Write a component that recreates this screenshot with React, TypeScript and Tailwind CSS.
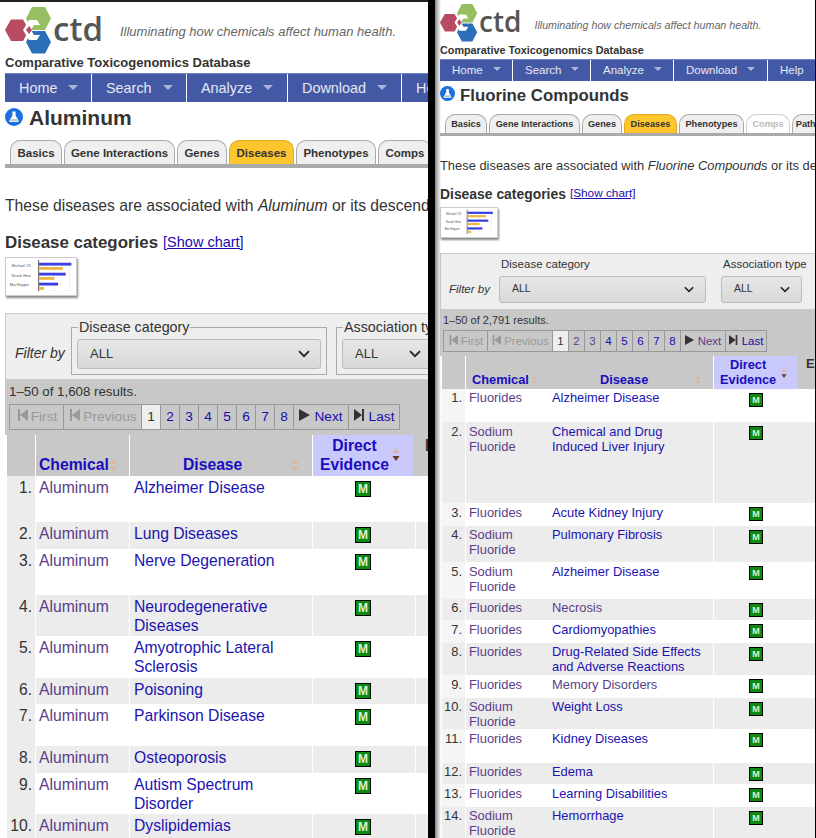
import type { ReactNode } from "react";

type Row = { n: number; chem: string[]; dis: string[]; seen?: boolean; h: string; t?: string };

const leftRows: Row[] = [
  { n: 1, chem: ["Aluminum"], dis: ["Alzheimer Disease"], h: "h-[46px]" },
  { n: 2, chem: ["Aluminum"], dis: ["Lung Diseases"], h: "h-[27px]" },
  { n: 3, chem: ["Aluminum"], dis: ["Nerve Degeneration"], h: "h-[46px]" },
  { n: 4, chem: ["Aluminum"], dis: ["Neurodegenerative", "Diseases"], h: "h-[41px]" },
  { n: 5, chem: ["Aluminum"], dis: ["Amyotrophic Lateral", "Sclerosis"], h: "h-[42px]" },
  { n: 6, chem: ["Aluminum"], dis: ["Poisoning"], h: "h-[26px]" },
  { n: 7, chem: ["Aluminum"], dis: ["Parkinson Disease"], h: "h-[42px]" },
  { n: 8, chem: ["Aluminum"], dis: ["Osteoporosis"], h: "h-[27px]" },
  { n: 9, chem: ["Aluminum"], dis: ["Autism Spectrum", "Disorder"], h: "h-[41px]" },
  { n: 10, chem: ["Aluminum"], dis: ["Dyslipidemias"], h: "h-[30px]" },
];

const sodium = ["Sodium", "Fluoride"];
const rightRows: Row[] = [
  { n: 1, chem: ["Fluorides"], dis: ["Alzheimer Disease"], h: "h-[33px]" },
  { n: 2, chem: sodium, dis: ["Chemical and Drug", "Induced Liver Injury"], h: "h-[81px]", t: "pt-[2px]" },
  { n: 3, chem: ["Fluorides"], dis: ["Acute Kidney Injury"], h: "h-[23px]", t: "pt-[2px]" },
  { n: 4, chem: sodium, dis: ["Pulmonary Fibrosis"], h: "h-[36px]" },
  { n: 5, chem: sodium, dis: ["Alzheimer Disease"], h: "h-[37px]", t: "pt-[2px]" },
  { n: 6, chem: ["Fluorides"], dis: ["Necrosis"], seen: true, h: "h-[21px]" },
  { n: 7, chem: ["Fluorides"], dis: ["Cardiomyopathies"], h: "h-[23px]", t: "pt-[2px]" },
  { n: 8, chem: ["Fluorides"], dis: ["Drug-Related Side Effects", "and Adverse Reactions"], h: "h-[32px]" },
  { n: 9, chem: ["Fluorides"], dis: ["Memory Disorders"], seen: true, h: "h-[23px]", t: "pt-[2px]" },
  { n: 10, chem: sodium, dis: ["Weight Loss"], h: "h-[31px]" },
  { n: 11, chem: ["Fluorides"], dis: ["Kidney Diseases"], h: "h-[34px]", t: "pt-[2px]" },
  { n: 12, chem: ["Fluorides"], dis: ["Edema"], h: "h-[21px]" },
  { n: 13, chem: ["Fluorides"], dis: ["Learning Disabilities"], h: "h-[23px]", t: "pt-[2px]" },
  { n: 14, chem: sodium, dis: ["Hemorrhage"], h: "h-[40px]" },
];

function Logo({ className }: { className: string }) {
  return (
    <svg viewBox="0 0 47 47" className={className}>
      <polygon points="0,23 6,12.5 18,12.5 24,23 18,34 6,34" fill="#b84a62" />
      <polygon points="21,11.5 27,0 40,0 46,11.5 40,23 27,23" fill="#96bf62" />
      <polygon points="21,35 27,24 40,24 46,35 40,46.5 27,46.5" fill="#2a6fb8" />
      <polygon points="18,23 24,13 32,13 35,18 29,18 26,23 29,28 35,28 32,33 24,33" fill="#fff" />
      <polygon points="21,23 24,19 27,23 24,27" fill="#b84a62" />
    </svg>
  );
}

function Flask({ className }: { className: string }) {
  return (
    <svg viewBox="0 0 18 18" className={className}>
      <circle cx="9" cy="9" r="9" fill="#1b6fe0" />
      <path d="M7.4 3.6h3.2v4l3 5.2c.3.6 0 1.2-.7 1.2H5.1c-.7 0-1-.6-.7-1.2l3-5.2z" fill="#fff" />
      <path d="M6 11h6l1 2.2H5z" fill="#b9c6d8" />
    </svg>
  );
}

function Chevron({ className }: { className: string }) {
  return (
    <svg viewBox="0 0 12 8" className={className} fill="none" stroke="#222" strokeWidth="1.8">
      <path d="M1 1.2l5 5 5-5" />
    </svg>
  );
}

function Sort({ active, className }: { active?: boolean; className: string }) {
  return (
    <svg viewBox="0 0 8 13" className={className}>
      <path d="M4 0l3.5 5h-7z" fill="#d9b6a0" />
      <path d="M4 13l3.5-5h-7z" fill={active ? "#6b3a1c" : "#d9b6a0"} />
    </svg>
  );
}

function Thumb({ className }: { className: string }) {
  return (
    <div className={className}>
      <svg viewBox="0 0 72 39" className="h-full w-full">
        <text x="5" y="9" fontSize="4" fill="#555">Michael CK</text>
        <text x="5" y="20" fontSize="4" fill="#555">Nicole Hew</text>
        <text x="3" y="30" fontSize="4" fill="#555">Mia Hopper</text>
        <path d="M34 3v32M50 3v32M66 3v32" stroke="#ddd" strokeWidth="0.5" />
        <path d="M33.500 2v33" stroke="#333" strokeWidth="0.8" />
        <rect x="34" y="5" width="34" height="3" fill="#3d3fe0" />
        <rect x="34" y="9.500" width="25" height="3" fill="#edb642" />
        <rect x="34" y="15.500" width="28" height="3" fill="#3d3fe0" />
        <rect x="34" y="20" width="16" height="3" fill="#edb642" />
        <rect x="34" y="26" width="20" height="3" fill="#3d3fe0" />
        <rect x="34" y="30.500" width="5" height="3" fill="#edb642" />
      </svg>
    </div>
  );
}

function NavItem({ label, w, big }: { label: string; w: string; big: boolean }) {
  return (
    <div
      className={`flex shrink-0 items-center border-r border-white ${w} ${
        big ? "pl-[14px] gap-[11px] pt-[1px] text-[14.400px]" : "pl-[12px] gap-[10px] pt-[1px] text-[11.500px]"
      }`}
    >
      <span className="text-[#e4e7f3]">{label}</span>
      <span
        className={
          big
            ? "mt-[-2px] border-x-[5px] border-t-[5px] border-x-transparent border-t-[#aab4d8]"
            : "mt-[-4px] border-x-[4px] border-t-[4px] border-x-transparent border-t-[#aab4d8]"
        }
      />
    </div>
  );
}

function Tab({ label, w, big, on, off }: { label: string; w: string; big: boolean; on?: boolean; off?: boolean }) {
  return (
    <div
      className={`flex shrink-0 items-center justify-center rounded-t-[10px] border border-b-0 font-bold ${w} ${
        big ? "h-[24px] pt-[3px] text-[11.500px]" : "h-[19px] pt-[1px] text-[9.200px]"
      } ${on ? "border-[#e2a91f] bg-[#fdc62e]" : "border-[#aaa] bg-[#efefef]"} ${
        off ? "border-[#ccc] bg-[#fff] text-[#bbb]" : "text-[#333]"
      }`}
    >
      {label}
    </div>
  );
}

function PagerCell({ w, children, cls = "" }: { w: string; children: ReactNode; cls?: string }) {
  return (
    <div className={`flex shrink-0 items-center justify-center gap-[3px] border-r border-[#999] pt-[1px] ${w} ${cls}`}>
      {children}
    </div>
  );
}

const Tri = ({ dir, color, cls }: { dir: "l" | "r"; color: string; cls: string }) => (
  <svg viewBox="0 0 12 12" className={cls}>
    {dir === "l" ? (
      <path d="M2 0h2v12H2zM12 0v12L4 6z" fill={color} />
    ) : (
      <path d="M0 0l11 6-11 6z" fill={color} />
    )}
  </svg>
);

function Badge({ big }: { big: boolean }) {
  return (
    <span
      className={`flex items-center justify-center border border-black bg-[#0c8a12] font-bold text-[#d8f5d0] ${
        big ? "h-[16px] w-[16px] text-[12px]" : "h-[14px] w-[14px] text-[9px]"
      }`}
    >
      M
    </span>
  );
}

function LeftPanel() {
  return (
    <div className="w-[428px] shrink-0 overflow-hidden border-t-2 border-[#222] bg-white text-[#333]">
      <div className="flex h-[53px] items-start pl-[5px] pt-[5px]">
        <Logo className="h-[47px] w-[47px] shrink-0" />
        <span className="mt-[3px] ml-[1px] font-['Open_Sans',sans-serif] text-[33px] leading-[38px] font-semibold text-[#555]">ctd</span>
        <span className="mt-[15px] ml-[17px] whitespace-nowrap text-[13px] text-[#666] italic">
          Illuminating how chemicals affect human health.
        </span>
      </div>
      <div className="ml-[5px] h-[18px] text-[13px] leading-[16px] font-bold whitespace-nowrap">Comparative Toxicogenomics Database</div>
      <div className="ml-[5px] flex h-[29px] border-t border-[#7384c4] bg-[#4459a6]">
        <NavItem big label="Home" w="w-[87px]" />
        <NavItem big label="Search" w="w-[95px]" />
        <NavItem big label="Analyze" w="w-[101px]" />
        <NavItem big label="Download" w="w-[114px]" />
        <NavItem big label="Help" w="w-[90px]" />
      </div>
      <div className="ml-[5px] flex h-[32px] items-center gap-[6px]">
        <Flask className="mb-[3px] h-[18px] w-[18px]" />
        <span className="text-[21px] font-bold">Aluminum</span>
      </div>
      <div className="ml-[5px] mt-[6px] flex gap-[2px] border-b-4 border-[#aaa] pl-[5px]">
        <Tab big label="Basics" w="w-[52px]" />
        <Tab big label="Gene Interactions" w="w-[111px]" />
        <Tab big label="Genes" w="w-[50px]" />
        <Tab big on label="Diseases" w="w-[65px]" />
        <Tab big label="Phenotypes" w="w-[80px]" />
        <Tab big label="Comps" w="w-[54px]" />
      </div>
      <p className="mt-[28px] ml-[5px] text-[15.700px] leading-[20px] whitespace-nowrap">
        These diseases are associated with <i>Aluminum</i> or its descendants.
      </p>
      <div className="mt-[17px] ml-[5px] flex h-[20px] items-center gap-[5px]">
        <span className="text-[16.900px] font-bold">Disease categories</span>
        <a className="text-[14.500px] text-[#1a0dab] underline">[Show chart]</a>
      </div>
      <Thumb className="mt-[4px] ml-[5px] h-[39px] w-[72px] border border-[#ccc] bg-white shadow-[1px_2px_2px_#888]" />

      <div className="ml-[5px] mt-[17px] flex h-[67px] w-[440px] items-center border border-[#ccc] bg-[#eee]">
        <span className="mt-[13px] ml-[9px] w-[56px] shrink-0 text-[14px] italic">Filter by</span>
        <div className="relative mt-[8px] h-[48px] w-[256px] shrink-0 border border-[#aaa] px-[5px] pt-[11px]">
          <span className="absolute top-[-9px] left-[6px] bg-[#eee] px-[1px] text-[14.300px] leading-[16px]">Disease category</span>
          <div className="flex h-[30px] items-center justify-between rounded-[3px] border border-[#bbb] bg-gradient-to-b from-[#e6e6e6] to-[#d9d9d9] pr-[10px] pl-[12px] text-[13px]">
            ALL
            <Chevron className="h-[8px] w-[12px]" />
          </div>
        </div>
        <div className="relative mt-[8px] ml-[9px] h-[48px] w-[100px] shrink-0 border border-[#aaa] px-[5px] pt-[11px]">
          <span className="absolute top-[-9px] left-[6px] bg-[#eee] px-[1px] text-[14.300px] leading-[16px] whitespace-nowrap">Association type</span>
          <div className="flex h-[30px] items-center justify-between rounded-[3px] border border-[#bbb] bg-gradient-to-b from-[#e6e6e6] to-[#d9d9d9] pr-[8px] pl-[12px] text-[13px]">
            ALL
            <Chevron className="h-[8px] w-[12px]" />
          </div>
        </div>
      </div>

      <div className="ml-[5px] h-[55px] bg-[#c8c8c8] pt-[3px] pl-[4px]">
        <div className="h-[21px] text-[13.300px] leading-[18px]">1–50 of 1,608 results.</div>
        <div className="flex h-[26px] w-[391px] border border-[#999] text-[13.700px]">
          <PagerCell w="w-[54px]" cls="text-[#999]"><Tri dir="l" color="#999" cls="mb-[5px] h-[12px] w-[12px]" />First</PagerCell>
          <PagerCell w="w-[78px]" cls="text-[#999]"><Tri dir="l" color="#999" cls="mb-[5px] h-[12px] w-[12px]" />Previous</PagerCell>
          <PagerCell w="w-[19px]" cls="bg-[#eee] text-[#333]">1</PagerCell>
          {[2, 3, 4, 5, 6, 7, 8].map((n) => (
            <PagerCell key={n} w="w-[19px]" cls="text-[#1a0dab]">{n}</PagerCell>
          ))}
          <PagerCell w="w-[55px]" cls="text-[#1a0dab]"><Tri dir="r" color="#333" cls="mb-[5px] h-[12px] w-[12px]" />Next</PagerCell>
          <div className="flex flex-1 items-center justify-center gap-[3px] pt-[1px] text-[#1a0dab]"><Tri dir="l" color="#333" cls="mb-[5px] h-[12px] w-[12px] rotate-180" />Last</div>
        </div>
      </div>

      <div className="ml-[7px] flex h-[41px] w-[430px] bg-[#c8c8c8] text-[15.700px] leading-[19px] font-bold text-[#1a0dc0]">
        <div className="w-[28px] shrink-0" />
        <div className="flex w-[94px] shrink-0 items-end border-l border-white pb-[2px] pl-[3px]">
          Chemical<Sort className="mb-[2px] h-[13px] w-[8px]" />
        </div>
        <div className="flex w-[183px] shrink-0 items-end border-l border-white pb-[2px]">
          <span className="ml-[53px]">Disease</span>
          <Sort className="mb-[2px] ml-[49px] h-[13px] w-[8px]" />
        </div>
        <div className="flex w-[101px] shrink-0 items-center gap-[3px] border-l border-white bg-[#c9c9fb] pb-[2px] pl-[7px] text-center">
          <span>Direct<br />Evidence</span>
          <Sort active className="h-[13px] w-[8px]" />
        </div>
        <div className="ml-[12px] pt-[1px] text-[#333]">E</div>
      </div>
      {leftRows.map((r, i) => (
        <div key={r.n} className={`ml-[7px] flex w-[430px] text-[15.700px] leading-[19px] ${r.h} ${i % 2 ? "bg-[#ececec]" : "bg-white"}`}>
          <div className="w-[28px] shrink-0 bg-[#ececec] pt-[2px] pr-[3px] text-right">{r.n}.</div>
          <div className="w-[94px] shrink-0 border-l border-white pt-[2px] pl-[3px] text-[#5a3e8a]">{r.chem[0]}</div>
          <div className="w-[183px] shrink-0 border-l border-white pt-[2px] pl-[4px] text-[#2013b0]">
            {r.dis.map((d) => <div key={d}>{d}</div>)}
          </div>
          <div className="flex w-[101px] shrink-0 justify-center border-l border-white pt-[5px]"><Badge big /></div>
          <div className="ml-[2px] w-[14px] border-l border-white" />
        </div>
      ))}
    </div>
  );
}

function RightPanel() {
  return (
    <div className="relative flex-1 overflow-hidden border-r border-black bg-white text-[#333]">
      <div className="absolute inset-y-0 left-0 z-10 w-[6px] bg-gradient-to-r from-[#888] to-transparent" />
      <div className="flex h-[42px] items-start pt-[4px] pl-[5px]">
        <Logo className="h-[38px] w-[38px] shrink-0" />
        <span className="mt-[1px] ml-[1px] font-['Open_Sans',sans-serif] text-[28px] leading-[32px] font-semibold text-[#555]">ctd</span>
        <span className="mt-[13px] ml-[13px] whitespace-nowrap text-[10.700px] text-[#666] italic">
          Illuminating how chemicals affect human health.
        </span>
      </div>
      <div className="ml-[5px] h-[17px] pt-[2px] text-[10.800px] leading-[13px] font-bold whitespace-nowrap">Comparative Toxicogenomics Database</div>
      <div className="ml-[5px] flex h-[22px] border-t border-[#7384c4] bg-[#4459a6]">
        <NavItem big={false} label="Home" w="w-[73px]" />
        <NavItem big={false} label="Search" w="w-[78px]" />
        <NavItem big={false} label="Analyze" w="w-[83px]" />
        <NavItem big={false} label="Download" w="w-[94px]" />
        <NavItem big={false} label="Help" w="w-[60px]" />
      </div>
      <div className="ml-[5px] flex h-[28px] items-center gap-[5px]">
        <Flask className="mb-[3px] h-[15px] w-[15px]" />
        <span className="pt-[2px] text-[16.800px] font-bold whitespace-nowrap">Fluorine Compounds</span>
      </div>
      <div className="ml-[5px] mt-[5px] flex gap-[2px] border-b-[3px] border-[#aaa] pl-[5px]">
        <Tab big={false} label="Basics" w="w-[42px]" />
        <Tab big={false} label="Gene Interactions" w="w-[91px]" />
        <Tab big={false} label="Genes" w="w-[40px]" />
        <Tab big={false} on label="Diseases" w="w-[53px]" />
        <Tab big={false} label="Phenotypes" w="w-[65px]" />
        <Tab big={false} off label="Comps" w="w-[44px]" />
        <Tab big={false} label="Pathways" w="w-[50px]" />
      </div>
      <p className="mt-[22px] ml-[5px] text-[12.900px] leading-[16px] whitespace-nowrap">
        These diseases are associated with <i>Fluorine Compounds</i> or its descendants.
      </p>
      <div className="mt-[11px] ml-[5px] flex h-[18px] items-center gap-[4px]">
        <span className="text-[13.900px] font-bold">Disease categories</span>
        <a className="text-[11.800px] text-[#1a0dab] underline">[Show chart]</a>
      </div>
      <Thumb className="mt-[4px] ml-[5px] h-[31px] w-[58px] border border-[#ccc] bg-white shadow-[1px_2px_2px_#888]" />

      <div className="ml-[5px] mt-[15px] flex h-[57px] w-[380px] items-center border border-[#ccc] bg-[#eee]">
        <span className="mt-[16px] ml-[8px] w-[50px] shrink-0 text-[11.500px] italic">Filter by</span>
        <div className="relative mt-[15px] w-[207px] shrink-0">
          <span className="absolute top-[-19px] left-[2px] text-[11.500px] leading-[14px]">Disease category</span>
          <div className="flex h-[27px] items-center justify-between rounded-[3px] border border-[#bbb] bg-gradient-to-b from-[#e6e6e6] to-[#d9d9d9] pr-[11px] pl-[12px] text-[10.500px]">
            ALL
            <Chevron className="h-[7px] w-[10px]" />
          </div>
        </div>
        <div className="relative mt-[15px] ml-[15px] w-[81px] shrink-0">
          <span className="absolute top-[-19px] left-[2px] text-[11.500px] leading-[14px] whitespace-nowrap">Association type</span>
          <div className="flex h-[27px] items-center justify-between rounded-[3px] border border-[#bbb] bg-gradient-to-b from-[#e6e6e6] to-[#d9d9d9] pr-[11px] pl-[12px] text-[10.500px]">
            ALL
            <Chevron className="h-[7px] w-[10px]" />
          </div>
        </div>
      </div>

      <div className="ml-[5px] h-[46px] bg-[#c8c8c8] pt-[3px] pl-[3px]">
        <div className="h-[17px] text-[11px] leading-[15px]">1–50 of 2,791 results.</div>
        <div className="flex h-[22px] w-[324px] border border-[#999] text-[11.500px]">
          <PagerCell w="w-[44px]" cls="text-[#999]"><Tri dir="l" color="#999" cls="mb-[4px] h-[10px] w-[10px]" />First</PagerCell>
          <PagerCell w="w-[65px]" cls="text-[#999]"><Tri dir="l" color="#999" cls="mb-[4px] h-[10px] w-[10px]" />Previous</PagerCell>
          <PagerCell w="w-[16px]" cls="bg-[#eee] text-[#333]">1</PagerCell>
          {[2, 3, 4, 5, 6, 7, 8].map((n) => (
            <PagerCell key={n} w="w-[16px]" cls={n < 4 ? "text-[#5a3e8a]" : "text-[#1a0dab]"}>{n}</PagerCell>
          ))}
          <PagerCell w="w-[45px]" cls="text-[#5a3e8a]"><Tri dir="r" color="#333" cls="mb-[4px] h-[10px] w-[10px]" />Next</PagerCell>
          <div className="flex flex-1 items-center justify-center gap-[3px] pt-[1px] text-[#1a0dab]"><Tri dir="l" color="#333" cls="mb-[4px] h-[10px] w-[10px] rotate-180" />Last</div>
        </div>
      </div>

      <div className="ml-[7px] flex h-[33px] w-[373px] bg-[#c8c8c8] text-[12.800px] leading-[14.500px] font-bold text-[#1a0dc0]">
        <div className="w-[23px] shrink-0" />
        <div className="flex w-[248px] shrink-0 items-end border-l border-white pb-[2px]">
          <span className="ml-[6px]">Chemical</span>
          <Sort className="mb-[2px] ml-[2px] h-[10px] w-[6px]" />
          <span className="ml-[63px]">Disease</span>
          <Sort className="mb-[2px] ml-[47px] h-[10px] w-[6px]" />
        </div>
        <div className="flex w-[85px] shrink-0 items-center gap-[5px] border-l border-white bg-[#c9c9fb] pl-[6px] text-center">
          <span>Direct<br />Evidence</span>
          <Sort active className="h-[10px] w-[6px]" />
        </div>
        <div className="ml-[8px] pt-[1px] text-[#333]">E</div>
      </div>
      {rightRows.map((r, i) => (
        <div key={r.n} className={`ml-[7px] flex w-[373px] text-[12.900px] leading-[15px] ${r.h} ${i % 2 ? "bg-[#ececec]" : "bg-white"}`}>
          <div className={`w-[23px] shrink-0 pr-[3px] text-right ${r.t ?? "pt-[1px]"} ${i % 2 ? "" : "bg-[#f5f5f5]"}`}>{r.n}.</div>
          <div className={`w-[83px] shrink-0 border-l border-white pl-[3px] text-[#5a3e8a] ${r.t ?? "pt-[1px]"}`}>
            {r.chem.map((c) => <div key={c}>{c}</div>)}
          </div>
          <div className={`w-[165px] shrink-0 pl-[4px] ${r.t ?? "pt-[1px]"}`}>
            {r.dis.map((d) => <div key={d} className={r.seen ? "text-[#5a3e8a]" : "text-[#2013b0]"}>{d}</div>)}
          </div>
          <div className="flex w-[85px] shrink-0 justify-center border-l border-white pt-[4px]"><Badge big={false} /></div>
        </div>
      ))}
    </div>
  );
}

export default function App() {
  return (
    <div className="flex h-[838px] w-[816px] overflow-hidden bg-black font-['Liberation_Sans',Arial,sans-serif]">
      <LeftPanel />
      <div className="w-[7px] shrink-0 bg-black" />
      <RightPanel />
    </div>
  );
}
